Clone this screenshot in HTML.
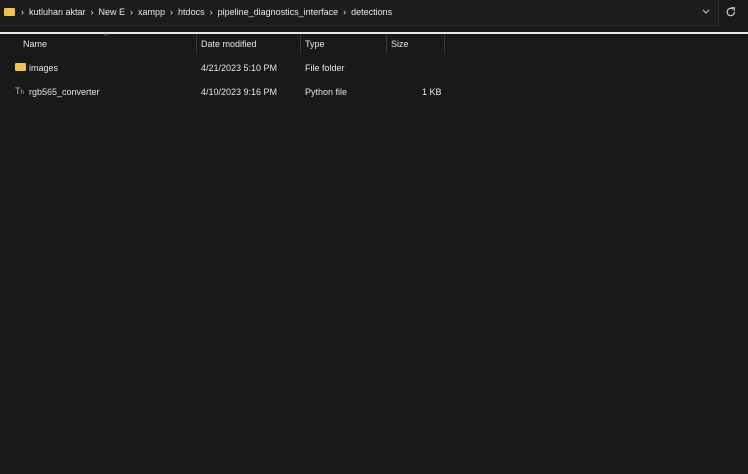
<!DOCTYPE html><html><head><style>
body{margin:0;width:748px;height:474px;background:#191919;font-family:"Liberation Sans",sans-serif;font-size:9px;color:#e6e6e6;position:relative;overflow:hidden}
.a{position:absolute}
</style></head><body>
<div class="a" style="left:-1px;top:-1px;width:718px;height:25px;border:1px solid #2e2e2e;background:#1c1c1c"></div>
<div class="a" style="left:4px;top:8px;width:11px;height:8px;background:#f0c24a;border-radius:1px"></div>
<div class="a" style="top:7px;left:21px;white-space:pre;font-size:9px;color:#e8e8e8">›  kutluhan aktar  ›  New E  ›  xampp  ›  htdocs  ›  pipeline_diagnostics_interface  ›  detections</div>
<svg class="a" style="left:701px;top:8px" width="10" height="8"><path d="M2 2 L5 5 L8 2" stroke="#ccc" fill="none" stroke-width="1.1"/></svg>
<svg class="a" style="left:725px;top:6px" width="12" height="12"><path d="M9.5 6 A3.7 3.7 0 1 1 8 3" stroke="#ccc" fill="none" stroke-width="1.2"/><path d="M6.5 1.5 L9.5 2 L9 5" stroke="#ccc" fill="none" stroke-width="1.2"/></svg>
<div class="a" style="left:0;top:32px;width:748px;height:2px;background:#e8e8e8"></div>
<div class="a" style="left:104px;top:33px;font-size:7px;color:#999">^</div>
<div class="a" style="top:39px;left:23px">Name</div>
<div class="a" style="top:39px;left:201px">Date modified</div>
<div class="a" style="top:39px;left:305px">Type</div>
<div class="a" style="top:39px;left:391px">Size</div>
<div class="a" style="left:196px;top:35px;width:1px;height:18px;background:#3a3a3a"></div>
<div class="a" style="left:300px;top:35px;width:1px;height:18px;background:#3a3a3a"></div>
<div class="a" style="left:386px;top:35px;width:1px;height:18px;background:#3a3a3a"></div>
<div class="a" style="left:444px;top:35px;width:1px;height:18px;background:#3a3a3a"></div>
<div class="a" style="left:15px;top:63px;width:11px;height:8px;background:#f0c24a;border-radius:1px"></div>
<div class="a" style="top:63px;left:29px">images</div>
<div class="a" style="top:63px;left:201px">4/21/2023 5:10 PM</div>
<div class="a" style="top:63px;left:305px">File folder</div>
<div class="a" style="top:86px;left:15px;font-size:9px;color:#bbb">T<span style="font-size:6px">h</span></div>
<div class="a" style="top:87px;left:29px">rgb565_converter</div>
<div class="a" style="top:87px;left:201px">4/10/2023 9:16 PM</div>
<div class="a" style="top:87px;left:305px">Python file</div>
<div class="a" style="top:87px;left:422px">1 KB</div>
</body></html>
